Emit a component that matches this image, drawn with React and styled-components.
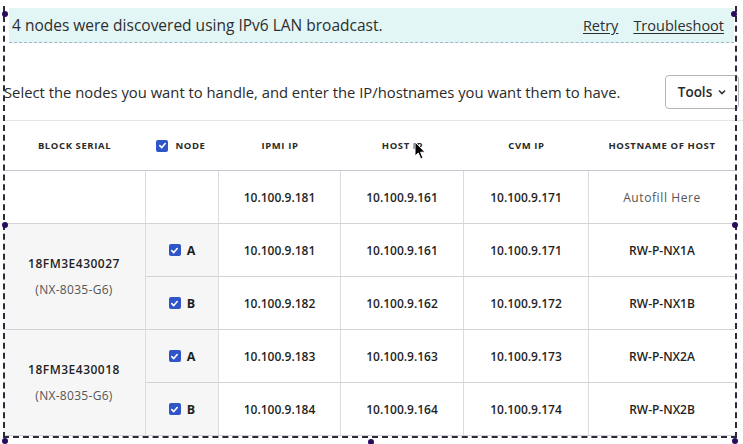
import React from "react";
import styled, { createGlobalStyle } from "styled-components";

const GlobalStyle = createGlobalStyle`
  body {
    margin: 0;
    background: #fff;
    font-family: "Open Sans", Lato, sans-serif;
    color: #2b2b2b;
  }
`;

const rows = [
  { block: null, node: null, ipmi: "10.100.9.181", host: "10.100.9.161", cvm: "10.100.9.171", name: "Autofill Here", hint: true },
  { block: { serial: "18FM3E430027", model: "(NX-8035-G6)" }, node: "A", ipmi: "10.100.9.181", host: "10.100.9.161", cvm: "10.100.9.171", name: "RW-P-NX1A" },
  { node: "B", ipmi: "10.100.9.182", host: "10.100.9.162", cvm: "10.100.9.172", name: "RW-P-NX1B" },
  { block: { serial: "18FM3E430018", model: "(NX-8035-G6)" }, node: "A", ipmi: "10.100.9.183", host: "10.100.9.163", cvm: "10.100.9.173", name: "RW-P-NX2A" },
  { node: "B", ipmi: "10.100.9.184", host: "10.100.9.164", cvm: "10.100.9.174", name: "RW-P-NX2B" },
];

const Check = () => (
  <CheckBox>
    <svg width="9" height="9" viewBox="0 0 10 10">
      <path d="M2 5.2 L4.2 7.3 L8 2.8" fill="none" stroke="#fff" strokeWidth="1.8" strokeLinecap="round" strokeLinejoin="round" />
    </svg>
  </CheckBox>
);

const App = () => {
  return (
    <Page>
      <GlobalStyle />
      <Banner>
        <span>4 nodes were discovered using IPv6 LAN broadcast.</span>
        <Links>
          <a>Retry</a>
          <a>Troubleshoot</a>
        </Links>
      </Banner>
      <Intro>
        <span>Select the nodes you want to handle, and enter the IP/hostnames you want them to have.</span>
        <ToolsButton>
          Tools
          <svg width="8" height="6" viewBox="0 0 8 6">
            <path d="M1 1.5 L4 4.5 L7 1.5" fill="none" stroke="#333" strokeWidth="1.6" />
          </svg>
        </ToolsButton>
      </Intro>
      <Grid>
        <Head>Block Serial</Head>
        <Head $node><Check />Node</Head>
        <Head>IPMI IP</Head>
        <Head>Host IP</Head>
        <Head>CVM IP</Head>
        <Head>Hostname of Host</Head>
        {rows.map((r, i) => (
          <React.Fragment key={i}>
            {r.block !== undefined && (
              <Cell $span={r.block ? 2 : 1} $shade={!!r.block} $stack>
                {r.block && (
                  <>
                    <Serial>{r.block.serial}</Serial>
                    <Model>{r.block.model}</Model>
                  </>
                )}
              </Cell>
            )}
            <Cell $shade={!!r.node}>
              {r.node && (
                <>
                  <Check />
                  <NodeLabel>{r.node}</NodeLabel>
                </>
              )}
            </Cell>
            <Cell>{r.ipmi}</Cell>
            <Cell>{r.host}</Cell>
            <Cell>{r.cvm}</Cell>
            <Cell $hint={r.hint} $last>{r.name}</Cell>
          </React.Fragment>
        ))}
      </Grid>
      <Frame>
        <Handle style={{ left: 1, top: 5 }} />
        <Handle style={{ left: 730, top: 5 }} />
        <Handle style={{ left: 1, top: 216 }} />
        <Handle style={{ left: 731, top: 216 }} />
        <Handle style={{ left: 1, top: 432 }} />
        <Handle style={{ left: 367, top: 433 }} />
        <Handle style={{ left: 731, top: 432 }} />
      </Frame>
      <Cursor width="13" height="20" viewBox="0 0 13 20">
        <path d="M1 1 L1 15 L4.3 12 L6.8 18 L9 17 L6.6 11.2 L11 11.2 Z" fill="#000" stroke="#fff" strokeWidth="1" />
      </Cursor>
    </Page>
  );
};

export default App;

const Page = styled.div`
  position: relative;
  width: 743px;
  height: 444px;
  padding-top: 8px;
  box-sizing: border-box;
  overflow: hidden;
`;

const Banner = styled.div`
  display: flex;
  align-items: center;
  justify-content: space-between;
  margin-left: 9px;
  width: 725px;
  height: 35px;
  padding: 0 10px 0 3px;
  box-sizing: border-box;
  background: #e2f6f6;
  border-bottom: 1px dashed #9fb6c8;
  font-size: 15.5px;
  color: #2e2e2e;
`;

const Links = styled.div`
  display: flex;
  gap: 15px;
  font-size: 14.5px;

  a {
    color: #2e2e2e;
    text-decoration: underline;
    text-underline-offset: 2px;
    cursor: pointer;
  }
`;

const Intro = styled.div`
  display: flex;
  align-items: center;
  justify-content: space-between;
  margin-top: 32px;
  padding-left: 4px;
  width: 735px;
  height: 34px;
  font-size: 14.8px;
  color: #2a2a2a;
`;

const ToolsButton = styled.button`
  display: flex;
  align-items: center;
  gap: 6px;
  height: 34px;
  width: 74px;
  justify-content: center;
  border: 1.5px solid #b5b5b5;
  border-radius: 4px;
  background: #fff;
  font-family: "Open Sans", sans-serif;
  font-size: 13.5px;
  font-weight: 600;
  color: #2a2a2a;
`;

const Grid = styled.div`
  display: grid;
  grid-template-columns: 143px 73px 122px 123px 125px 146px;
  grid-template-rows: 50px repeat(5, 53px);
  margin-top: 11px;
  margin-left: 3px;
  border-top: 1px solid #e4e4e4;
`;

const Head = styled.div`
  display: flex;
  align-items: center;
  justify-content: center;
  gap: ${(p) => (p.$node ? "7px" : "6px")};
  padding-right: ${(p) => (p.$node ? "3px" : "0")};
  font-size: 9.5px;
  font-weight: 700;
  letter-spacing: 0.6px;
  text-transform: uppercase;
  color: #2a2a2a;
  border-bottom: 1px solid #c4c9d4;
`;

const Cell = styled.div`
  display: flex;
  flex-direction: ${(p) => (p.$stack ? "column" : "row")};
  align-items: center;
  justify-content: center;
  gap: ${(p) => (p.$stack ? "9px" : "6px")};
  grid-row: span ${(p) => p.$span || 1};
  background: ${(p) => (p.$shade ? "#f6f6f6" : "#fff")};
  border-bottom: 1px solid #d2d2d8;
  border-right: ${(p) => (p.$last ? "none" : "1px solid #dcdcdc")};
  font-size: 12px;
  font-weight: ${(p) => (p.$hint ? 400 : 600)};
  letter-spacing: ${(p) => (p.$hint ? "0.6px" : "0")};
  color: ${(p) => (p.$hint ? "#555" : "#1f1f1f")};
`;

const Serial = styled.span`
  font-size: 12px;
  font-weight: 600;
  letter-spacing: 0.5px;
  color: #1f1f1f;
`;

const Model = styled.span`
  font-size: 12px;
  font-weight: 400;
  letter-spacing: 0.3px;
  color: #555;
`;

const NodeLabel = styled.span`
  font-size: 12.5px;
  font-weight: 700;
`;

const CheckBox = styled.span`
  display: inline-flex;
  align-items: center;
  justify-content: center;
  width: 12px;
  height: 12px;
  border-radius: 2px;
  background: #2f55c9;
`;

const Frame = styled.div`
  position: absolute;
  left: 3px;
  top: 6px;
  width: 730px;
  height: 430px;
  border-left: 2px dashed #2a2a3a;
  border-right: 2px dashed #2a2a3a;
  border-bottom: 2px dashed #2a2a3a;
  pointer-events: none;
`;

const Handle = styled.span`
  position: absolute;
  width: 6px;
  height: 6px;
  border-radius: 50%;
  background: #2a0c5e;
  transform: translate(-4px, 0);
`;

const Cursor = styled.svg`
  position: absolute;
  left: 414px;
  top: 141px;
`;
